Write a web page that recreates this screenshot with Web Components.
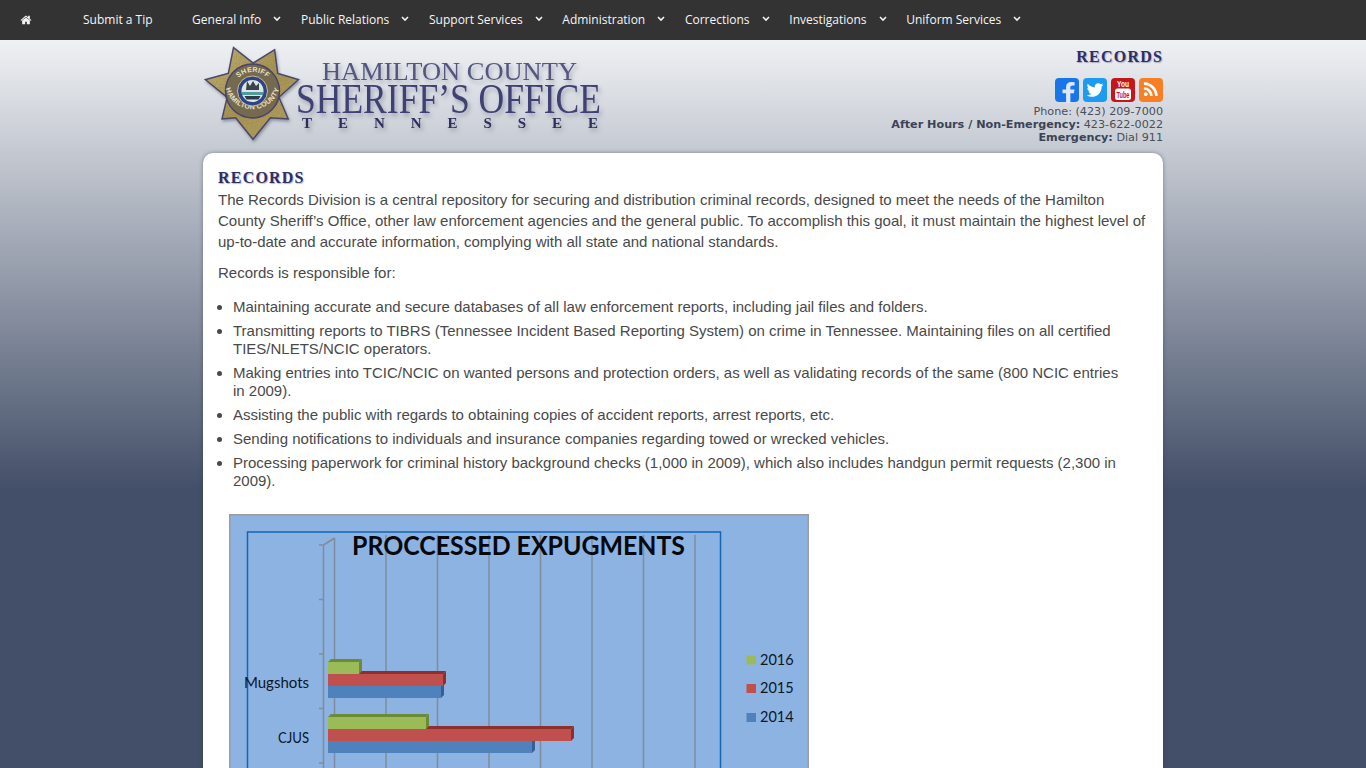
<!DOCTYPE html>
<html lang="en">
<head>
<meta charset="utf-8">
<title>Records - Hamilton County Sheriff's Office</title>
<style>
  html { background: #434f68; }
  body {
    margin: 0;
    min-height: 100vh;
    font-family: "Liberation Sans", Arial, sans-serif;
    background: linear-gradient(#eff1f4, #434f68) no-repeat 0 40px / 100% 450px #434f68;
  }
  content-card li { margin-bottom: 6px; }
</style>
</head>
<body>
<site-nav>
  <nav-item home></nav-item>
  <nav-item gap="39.500">Submit a Tip</nav-item>
  <nav-item drop>General Info</nav-item>
  <nav-item drop>Public Relations</nav-item>
  <nav-item drop>Support Services</nav-item>
  <nav-item drop>Administration</nav-item>
  <nav-item drop>Corrections</nav-item>
  <nav-item drop>Investigations</nav-item>
  <nav-item drop>Uniform Services</nav-item>
</site-nav>

<site-header>
  <site-logo slot="logo"></site-logo>
  <serif-title slot="title">RECORDS</serif-title>
  <social-icons slot="social"></social-icons>
  <contact-line slot="contact">Phone: (423) 209-7000</contact-line>
  <contact-line slot="contact"><b>After Hours / Non-Emergency:</b> 423-622-0022</contact-line>
  <contact-line slot="contact"><b>Emergency:</b> Dial 911</contact-line>
</site-header>

<content-card>
  <serif-title>RECORDS</serif-title>
  <p>The Records Division is a central repository for securing and distribution criminal records, designed to meet the needs of the Hamilton County Sheriff’s Office, other law enforcement agencies and the general public. To accomplish this goal, it must maintain the highest level of up-to-date and accurate information, complying with all state and national standards.</p>
  <p>Records is responsible for:</p>
  <ul>
    <li>Maintaining accurate and secure databases of all law enforcement reports, including jail files and folders.</li>
    <li>Transmitting reports to TIBRS (Tennessee Incident Based Reporting System) on crime in Tennessee. Maintaining files on all certified TIES/NLETS/NCIC operators.</li>
    <li>Making entries into TCIC/NCIC on wanted persons and protection orders, as well as validating records of the same (800 NCIC entries in 2009).</li>
    <li>Assisting the public with regards to obtaining copies of accident reports, arrest reports, etc.</li>
    <li>Sending notifications to individuals and insurance companies regarding towed or wrecked vehicles.</li>
    <li>Processing paperwork for criminal history background checks (1,000 in 2009), which also includes handgun permit requests (2,300 in 2009).</li>
  </ul>
  <expunge-chart></expunge-chart>
</content-card>

<script>
class SiteNav extends HTMLElement {
  constructor() {
    super();
    this.attachShadow({ mode: 'open' }).innerHTML = `
      <style>
        :host { display: flex; align-items: center; height: 40px; padding: 0 0 1px 20px; box-sizing: border-box; background: #333;
          font: 12px/39px "Open Sans", sans-serif; color: #f6f6f6; }
      </style>
      <slot></slot>`;
  }
}
customElements.define("site-nav", SiteNav);

class NavItem extends HTMLElement {
  connectedCallback() {
    const home = this.hasAttribute("home");
    const drop = this.hasAttribute("drop");
    const root = this.attachShadow({ mode: 'open' });
    root.innerHTML = `
      <style>
        :host { display: flex; align-items: center; white-space: nowrap; margin-right: ${home ? 51 : drop ? 19.7 : this.getAttribute("gap") || 0}px; }
        svg { display: block; }
        .home { width: 12px; height: 12px; fill: #f2f2f2; }
        .chev { width: 8px; height: 6px; margin: -2px 0 0 12px; fill: none; stroke: #f2f2f2; stroke-width: 1.6; }
      </style>
      ${home ? `<svg class="home" viewBox="0 0 1792 1792"><path d="M1472 992v480q0 26-19 45t-45 19h-384v-384h-256v384h-384q-26 0-45-19t-19-45v-480q0-1 .5-3t.5-3l575-474 575 474q1 2 1 6zm223-69l-62 74q-8 9-21 11h-3q-13 0-21-7l-692-577-692 577q-12 8-24 7-13-2-21-11l-62-74q-8-10-7-23.500t11-21.500l719-599q32-26 76-26t76 26l244 204v-195q0-14 9-23t23-9h192q14 0 23 9t9 23v408l219 182q10 8 11 21.500t-7 23.500z"/></svg>` : `<slot></slot>`}
      ${drop ? `<svg class="chev" viewBox="0 0 8 6"><path d="M1 1l3 3 3-3"/></svg>` : ``}`;
  }
}
customElements.define("nav-item", NavItem);

class SiteHeader extends HTMLElement {
  constructor() {
    super();
    this.attachShadow({ mode: 'open' }).innerHTML = `
      <style>
        :host { display: flex; justify-content: space-between; width: 960px; height: 113px; margin: 0 auto; }
        .right { display: flex; flex-direction: column; align-items: flex-end; padding-top: 7px; }
        .social { margin: 11px 0 3px; }
      </style>
      <slot name="logo"></slot>
      <div class="right">
        <slot name="title"></slot>
        <div class="social"><slot name="social"></slot></div>
        <slot name="contact"></slot>
      </div>`;
  }
}
customElements.define("site-header", SiteHeader);

class SiteLogo extends HTMLElement {
  constructor() {
    super();
    const tips = [[31,9],[71,11],[94,40],[84,78],[50,98],[20,78],[4,40]];
    const valleys = [[50,24],[74,34],[75,57],[67,77],[33,77],[25,57],[26,34]];
    let star = "";
    tips.forEach((t, i) => { star += (i ? "L" : "M") + t.join(" ") + "L" + valleys[i].join(" "); });
    star += "Z";
    this.attachShadow({ mode: 'open' }).innerHTML = `
      <style>
        :host { display: block; width: 400px; height: 105px; }
        svg { display: block; overflow: visible; }
        text { font-family: "Liberation Serif", serif; fill: #3f4074; }
        .sh { filter: drop-shadow(2px 3px 2px rgba(70,75,105,.38)); }
        .t1 { font-size: 25.500px; fill: #54567f; }
        .t2 { font-size: 42px; }
        .t3 { font-size: 15px; font-weight: bold; fill: #2d2e5c; }
        .ring { font: bold 7px "Liberation Sans", sans-serif; fill: #ebe3c4; letter-spacing: .3px; }
      </style>
      <svg width="400" height="105" viewBox="0 0 400 105">
        <defs>
          <linearGradient id="gold" x1="0" y1="0" x2="1" y2="1">
            <stop offset="0" stop-color="#c6b577"/><stop offset=".5" stop-color="#a8954f"/><stop offset="1" stop-color="#b9a666"/>
          </linearGradient>
          <filter id="star-shadow" x="-20%" y="-20%" width="140%" height="140%"><feDropShadow dx="1" dy="2" stdDeviation="1.500" flood-color="#565a70" flood-opacity=".55"/></filter>
          <filter id="grain" x="0" y="0" width="100%" height="100%">
            <feTurbulence type="fractalNoise" baseFrequency=".9" numOctaves="2" seed="4"/>
            <feColorMatrix values="0 0 0 0 .25  0 0 0 0 .2  0 0 0 0 .1  0 0 0 1.100 -.35"/>
            <feComposite in2="SourceGraphic" operator="in"/>
            <feMerge><feMergeNode in="SourceGraphic"/><feMergeNode/></feMerge>
          </filter>
          <path id="arcTop" d="M29 53A21 21 0 0 1 71 53"/>
          <path id="arcBot" d="M22.500 47A27.500 27.500 0 0 0 76.500 47"/>
        </defs>
        <path d="${star}" fill="#4b4767" stroke="#4b4767" stroke-width="3" stroke-linejoin="miter" filter="url(#star-shadow)"/>
        <path d="${star}" fill="url(#gold)" filter="url(#grain)"/>
        <circle cx="49.500" cy="51" r="27" fill="#75694f" stroke="#47436a" stroke-width="1.500"/>
        <text class="ring"><textPath href="#arcTop" startOffset="50%" text-anchor="middle">SHERIFF</textPath></text>
        <text class="ring"><textPath href="#arcBot" startOffset="50%" text-anchor="middle">HAMILTON COUNTY</textPath></text>
        <circle cx="49.500" cy="51" r="15" fill="#2f4488" stroke="#c8bc90" stroke-width="1"/>
        <circle cx="49.500" cy="51" r="11" fill="#d9e6e4"/>
        <path d="M39 52h21v3H39z" fill="#4f9ba0"/>
        <path d="M41.500 56h16l-2 3.500h-12z" fill="#2a3a4a"/>
        <path d="M44 41l3 5 3-5 3 5 3-3v7H43z" fill="#39424e"/>
        <g class="sh">
          <text class="t1" x="119" y="40" textLength="255" lengthAdjust="spacingAndGlyphs">HAMILTON COUNTY</text>
          <text class="t2" x="93" y="73" textLength="305" lengthAdjust="spacingAndGlyphs">SHERIFF’S OFFICE</text>
          <text class="t3" x="99" y="88" textLength="296" lengthAdjust="spacing">TENNESSEE</text>
        </g>
      </svg>`;
  }
}
customElements.define("site-logo", SiteLogo);

class SerifTitle extends HTMLElement {
  constructor() {
    super();
    this.attachShadow({ mode: 'open' }).innerHTML = `
      <style>
        :host { display: block; font: bold 16px/20px "Liberation Serif", serif; letter-spacing: 1.200px; color: #2e2f63;
          text-shadow: 1px 1px 1px rgba(90,95,130,.45); }
        :host-context(content-card) { height: 21px; }
      </style>
      <slot></slot>`;
  }
}
customElements.define("serif-title", SerifTitle);

class SocialIcons extends HTMLElement {
  constructor() {
    super();
    this.attachShadow({ mode: 'open' }).innerHTML = `
      <style>
        :host { display: flex; gap: 4px; }
        svg { display: block; width: 24px; height: 24px; border-radius: 4px; overflow: visible; }
        text { font: bold 8.500px "Liberation Sans", sans-serif; fill: #fff; }
      </style>
      <svg viewBox="0 0 24 24" style="background:#1877e8"><path fill="#dfe7f5" transform="translate(.8 4) scale(.014 .0125)" d="M1343 12v264h-157q-86 0-116 36t-30 108v189h293l-39 296h-254v759h-306v-759h-255v-296h255v-218q0-186 104-288.500t277-102.500q147 0 228 12z"/></svg>
      <svg viewBox="0 0 24 24" style="background:#1d9bf0"><path fill="#fff" transform="translate(2.500 2.500) scale(.0106)" d="M1684 408q-67 98-162 167 1 14 1 42 0 130-38 259.500t-115.500 248.500-184.500 210.500-258 146-323 54.500q-271 0-496-145 35 4 78 4 225 0 401-138-105-2-188-64.500t-114-159.500q33 5 61 5 43 0 85-11-112-23-185.500-111.500t-73.500-205.500v-4q68 38 146 41-66-44-105-115t-39-154q0-88 44-163 121 149 294.500 238.500t371.500 99.500q-8-38-8-74 0-134 94.500-228.500t228.500-94.500q140 0 236 102 109-21 205-78-37 115-142 178 93-10 186-50z"/></svg>
      <svg viewBox="0 0 24 24" style="background:#c4161c"><text x="12" y="9" text-anchor="middle" textLength="12" lengthAdjust="spacingAndGlyphs">You</text><rect x="4" y="10.500" width="16" height="11.500" rx="2.500" fill="#fff"/><text x="12" y="19.500" text-anchor="middle" textLength="13" lengthAdjust="spacingAndGlyphs" style="fill:#c4161c">Tube</text></svg>
      <svg viewBox="0 0 24 24" style="background:#f58025"><path fill="#fff" transform="translate(3 3) scale(.0098)" d="M576 1344q0 80-56 136t-136 56-136-56-56-136 56-136 136-56 136 56 56 136zm512 123q2 28-17 48-18 21-47 21h-135q-25 0-43-16.500t-20-41.500q-22-229-184.500-391.500t-391.500-184.500q-25-2-41.500-20t-16.500-43v-135q0-29 21-47 17-17 43-17h5q160 13 306 80.500t259 181.500q114 113 181.500 259t80.500 306zm512 2q2 27-18 47-18 20-46 20h-143q-26 0-44.500-17.500t-19.500-42.500q-12-215-101-408.500t-231.500-336-336-231.500-408.500-102q-25-1-42.500-19.500t-17.500-43.500v-143q0-28 20-46 18-18 44-18h3q262 13 501.500 120t425.500 294q187 186 294 425.500t120 501.500z"/></svg>`;
  }
}
customElements.define("social-icons", SocialIcons);

class ContactLine extends HTMLElement {
  constructor() {
    super();
    this.attachShadow({ mode: 'open' }).innerHTML = `
      <style>
        :host { display: block; font: 11.200px/13px "DejaVu Sans", Verdana, sans-serif; color: #4a4f5a; text-align: right; white-space: nowrap; }
        ::slotted(b) { color: #3a4457; }
      </style>
      <slot></slot>`;
  }
}
customElements.define("contact-line", ContactLine);

class ContentCard extends HTMLElement {
  constructor() {
    super();
    this.attachShadow({ mode: 'open' }).innerHTML = `
      <style>
        :host { display: block; box-sizing: border-box; width: 960px; margin: 0 auto; padding: 15px 15px 30px;
          background: #fff; border-radius: 10px; box-shadow: 0 0 4px rgba(40,50,70,.45);
          font: 15px/21px "Liberation Sans", Arial, sans-serif; color: #494949; }
        ::slotted(p) { margin: 0 0 10px; }
        ::slotted(ul) { margin: 14.500px 0 24px; padding: 0 20px 0 15px; line-height: 18px; }
      </style>
      <slot></slot>`;
  }
}
customElements.define("content-card", ContentCard);

class ExpungeChart extends HTMLElement {
  constructor() {
    super();
    const bar = (x, y, w, c, top, side) => `
      <path d="M${x} ${y}l3 -3h${w}l-3 3z" fill="${top}"/>
      <path d="M${x + w} ${y}l3 -3v12l-3 3z" fill="${side}"/>
      <rect x="${x}" y="${y}" width="${w}" height="12" fill="${c}"/>`;
    const G = "#9bbb59", R = "#c0504d", B = "#4f81bd";
    const group = (y, g, r, b) =>
      bar(99, y + 24, b, B, "#3b6594", "#35608f") + bar(99, y + 12, r, R, "#8f2f2c", "#8f2f2c") + bar(99, y, g, G, "#6d8a35", "#6d8a35");
    let grid = "";
    for (let i = 0; i < 8; i++) {
      const x = 105.500 + i * 51.500;
      grid += `<path d="M${x} ${i ? 21 : 24}V350" stroke="#7f8c9c" stroke-width="1.500"/>`;
    }
    let ticks = "";
    for (let y = 31; y < 350; y += 54.500) ticks += `<path d="M90 ${y}h4" stroke="#7f8c9c" stroke-width="1.500"/>`;
    const legend = [["2016", G, 150.500], ["2015", R, 179], ["2014", B, 208]].map(([t, c, y]) =>
      `<rect x="517.500" y="${y - 9}" width="9.500" height="9" fill="${c}"/><text class="lab" x="531" y="${y}" style="font-size:14.500px">${t}</text>`).join("");
    this.attachShadow({ mode: 'open' }).innerHTML = `
      <style>
        :host { display: block; width: 580px; margin-left: 11px; }
        svg { display: block; }
        text { font-family: Lato, "Open Sans", sans-serif; fill: #0b1626; }
        .lab { font-size: 15px; }
        .ttl { font-size: 26px; font-weight: bold; fill: #05080d; }
      </style>
      <svg width="580" height="350" viewBox="0 0 580 350">
        <rect x=".75" y=".75" width="578.500" height="360" fill="#8db3e2" stroke="#9a9c9e" stroke-width="1.500"/>
        <rect x="18.500" y="18" width="473" height="340" fill="none" stroke="#1565b5" stroke-width="1.500"/>
        ${grid}
        <path d="M94.500 31V350M94.500 31l11-7" stroke="#7f8c9c" stroke-width="1.500" fill="none"/>
        ${ticks}
        <text class="ttl" x="123" y="41" textLength="333" lengthAdjust="spacingAndGlyphs">PROCCESSED EXPUGMENTS</text>
        ${group(148, 31, 115, 113)}
        ${group(203, 98, 243, 204)}
        <text class="lab" x="80" y="174" text-anchor="end">Mugshots</text>
        <text class="lab" x="80" y="229" text-anchor="end" textLength="31" lengthAdjust="spacingAndGlyphs">CJUS</text>
        ${legend}
      </svg>`;
  }
}
customElements.define("expunge-chart", ExpungeChart);
</script>
</body>
</html>
